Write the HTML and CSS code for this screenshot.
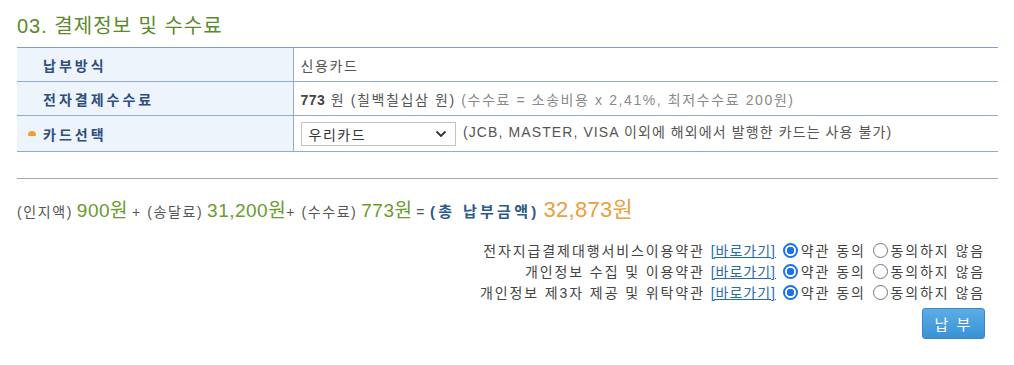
FILE: index.html
```html
<!DOCTYPE html>
<html lang="ko">
<head>
<meta charset="utf-8">
<link rel="stylesheet" href="styles.css">
</head>
<body>
<div class="page">
  <h2 class="title">03. 결제정보 및 수수료</h2>
  <table class="info">
    <tr>
      <th><span class="lbl">납부방식</span></th>
      <td>신용카드</td>
    </tr>
    <tr>
      <th><span class="lbl">전자결제수수료</span></th>
      <td><b class="num">773</b> 원 (칠백칠십삼 원) <span class="muted">(수수료 = 소송비용 x 2,41%, 최저수수료 200원)</span></td>
    </tr>
    <tr>
      <th><span class="star"></span><span class="lbl">카드선택</span></th>
      <td>
        <div class="sel"><span>우리카드</span><svg width="12" height="8" viewBox="0 0 12 8"><path d="M1.5 1.5 L6 6 L10.5 1.5" fill="none" stroke="#333" stroke-width="1.8"/></svg></div>
        <span class="note">(JCB, MASTER, VISA 이외에 해외에서 발행한 카드는 사용 불가)</span>
      </td>
    </tr>
  </table>
  <div class="sep"></div>
  <div class="total"><span class="g">(인지액)</span> <span class="amt">900원</span> <span class="g">+ (송달료)</span> <span class="amt">31,200원</span><span class="g">+ (수수료)</span> <span class="amt">773원</span> <span class="g">=</span> <b class="sum">(총 납부금액)</b> <span class="grand">32,873원</span></div>
  <div class="terms">
    <div class="term">전자지급결제대행서비스이용약관 <a href="#">[바로가기]</a> <span class="radio on"></span>약관 동의 <span class="radio"></span>동의하지 않음</div>
    <div class="term">개인정보 수집 및 이용약관 <a href="#">[바로가기]</a> <span class="radio on"></span>약관 동의 <span class="radio"></span>동의하지 않음</div>
    <div class="term">개인정보 제3자 제공 및 위탁약관 <a href="#">[바로가기]</a> <span class="radio on"></span>약관 동의 <span class="radio"></span>동의하지 않음</div>
  </div>
  <div class="actions"><button class="pay">납 부</button></div>
</div>
</body>
</html>
```
FILE: styles.css
```css
* { box-sizing: border-box; }
body {
  margin: 0;
  background: #fff;
  font-family: "Liberation Sans", "Noto Sans CJK KR", sans-serif;
  color: #444;
  font-size: 14px;
}
.page { padding: 0 16px 0 17px; }
.title {
  margin: 0;
  padding-top: 10px;
  height: 47px;
  font-size: 20px;
  font-weight: normal;
  color: #5b8a2c;
  letter-spacing: 1px;
}
.info {
  width: 981px;
  border-collapse: collapse;
  border-top: 1px solid #7fa0c4;
}
.info th, .info td {
  border-bottom: 1px solid #92accb;
  height: 34px;
  padding: 0;
}
.info tr:last-child th, .info tr:last-child td { height: 36px; }
.info th {
  width: 276px;
  background: #eef4fc;
  border-right: 1px solid #92accb;
  text-align: left;
  padding-left: 26px;
  font-weight: bold;
  color: #2e4e7e;
  font-size: 14px;
  position: relative;
  letter-spacing: 3px;
}
.info td { padding-left: 7px; color: #555; letter-spacing: 1.6px; }
.num { font-weight: bold; color: #444; letter-spacing: 0.5px; }
.muted { color: #8a8a8a; }
.star {
  position: absolute;
  left: 11px;
  top: 15px;
  width: 8px;
  height: 5px;
  border-radius: 4px 4px 1px 1px;
  background: #f0a030;
}
.sel {
  display: inline-flex;
  align-items: center;
  justify-content: space-between;
  vertical-align: middle;
  width: 155px;
  height: 24px;
  border: 1px solid #c4c4c4;
  padding: 0 8px 0 7px;
  margin-right: 2px;
  color: #333;
  letter-spacing: 1.5px;
}
.note { letter-spacing: 1.1px; }
.sep {
  margin-top: 26px;
  width: 981px;
  border-top: 1px solid #a8a8a8;
}
.total {
  margin-top: 16px;
  height: 30px;
  line-height: 30px;
  white-space: pre;
}
.g { color: #555; font-size: 14px; letter-spacing: 1.6px; }
.amt { color: #6a9a2a; font-size: 19px; letter-spacing: 0.5px; }
.sum { color: #2a5a8e; font-size: 15px; letter-spacing: 3.3px; }
.grand { color: #e8a040; font-size: 22px; letter-spacing: 0.3px; }
.terms {
  margin-top: 16px;
  width: 968px;
  text-align: right;
}
.term {
  height: 21px;
  line-height: 21px;
  white-space: pre;
  color: #444;
  font-size: 14px;
  letter-spacing: 1.9px;
}
.term a { color: #2a6aa8; text-decoration: underline; letter-spacing: 1px; }
.radio {
  display: inline-block;
  vertical-align: -2px;
  width: 15px;
  height: 15px;
  border: 1px solid #767676;
  border-radius: 50%;
  margin: 0 3px 0 1px;
}
.radio.on {
  border: 2px solid #1a73e8;
  background: radial-gradient(circle, #1a73e8 0 3.5px, #fff 4px);
}
.actions {
  width: 968px;
  display: flex;
  justify-content: flex-end;
  margin-top: 4px;
}
.pay {
  width: 63px;
  height: 31px;
  border: 1px solid #3c86c4;
  border-radius: 3px;
  background: linear-gradient(#5aaee8, #3a92d4);
  color: #fff;
  font-family: inherit;
  font-size: 15px;
  letter-spacing: 2px;
}
```
